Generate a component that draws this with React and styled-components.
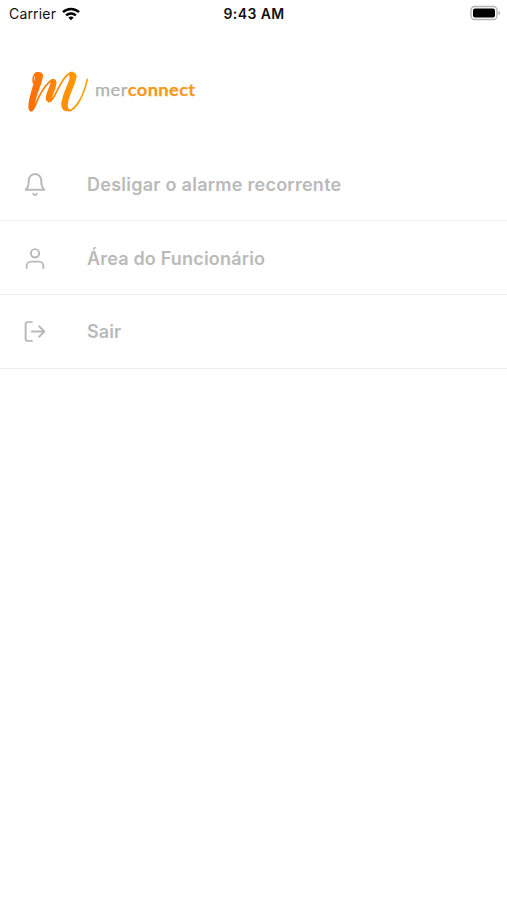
import React from "react";
import styled, { createGlobalStyle } from "styled-components";

const GlobalStyle = createGlobalStyle`
  *, *::before, *::after { box-sizing: border-box; }
  body { margin: 0; background: #fff; font-family: Inter, "Liberation Sans", sans-serif; }
`;

const Screen = styled.div`
  display: flex;
  flex-direction: column;
  width: 100%;
  height: 900px;
  overflow: hidden;
  background: #fff;
`;

const StatusBar = styled.header`
  display: grid;
  grid-template-columns: 1fr auto 1fr;
  align-items: center;
  height: 28px;
  padding: 0 6px 0 9px;
  color: #111;
`;

const Network = styled.div`
  display: flex;
  align-items: center;
  gap: 6px;
`;

const Carrier = styled.span`
  font-size: 14px;
  line-height: 20px;
  letter-spacing: 0.18px;
`;

const Clock = styled.time`
  margin-right: 2px;
  font-size: 14px;
  line-height: 20px;
  font-weight: 600;
  letter-spacing: 0.4px;
`;

const BatterySlot = styled.div`
  display: flex;
  justify-content: flex-end;
  padding-bottom: 2px;
`;

const Brand = styled.div`
  display: flex;
  align-items: flex-start;
  height: 120px;
  padding: 34px 0 0 20px;
`;

const Wordmark = styled.div`
  margin-top: 16px;
  font-family: Lato, sans-serif;
  font-size: 17px;
  line-height: 24px;
  letter-spacing: 0.4px;
  color: #b0b0b0;
  -webkit-text-stroke: 0.25px currentColor;
  transform: scaleX(1.08);
  transform-origin: left center;
`;

const WordmarkStrong = styled.span`
  font-weight: 700;
  letter-spacing: 0.3px;
  color: #f59a1b;
`;

const Menu = styled.nav`
  display: flex;
  flex-direction: column;
`;

const MenuIcon = styled.svg`
  flex: none;
  width: 26px;
  height: 25px;
  margin-right: 39px;
  fill: none;
  stroke: #bababa;
  stroke-width: 1.9;
  stroke-linecap: round;
  stroke-linejoin: round;
`;

const MenuLabel = styled.span`
  padding-top: 2px;
  font-size: 18px;
  line-height: 24px;
  font-weight: 600;
  letter-spacing: ${(p) => p.$spacing};
`;

const MenuItem = styled.a`
  display: flex;
  align-items: center;
  height: 74px;
  padding: 1px 0 0 22px;
  border-bottom: 1px solid #efefef;
  color: #bababa;
  &:first-child { height: 73px; padding-top: 0; }
  &:last-child { padding-top: 0; }
  &:last-child ${MenuLabel} { padding-top: 0; }
`;

function Wifi() {
  return (
    <svg width="18" height="14" viewBox="0 0 18 14" fill="none" stroke="#000" strokeWidth="2.5">
      <path d="M1 5.1C5.5 .8 12.5 .8 17 5.1" />
      <path d="M4.1 8.4C6.9 5.8 11.1 5.8 13.9 8.4" />
      <path d="M9 13.3 6.3 10.6Q9 8.5 11.7 10.6Z" fill="#000" stroke="none" />
    </svg>
  );
}

function Battery() {
  return (
    <svg width="31" height="16" viewBox="0 0 31 16">
      <rect x="1" y="1.5" width="26" height="13" rx="3.8" fill="#fff" stroke="#b5b5b5" strokeWidth="1.4" />
      <rect x="3" y="3.5" width="22" height="9" rx="2" fill="#000" />
      <path d="M28.5 6v4q1.6-.6 1.6-2t-1.6-2Z" fill="#aaa" />
    </svg>
  );
}

function LogoMark() {
  return (
    <svg width="75" height="58" viewBox="0 0 225 174">
      <defs>
        <linearGradient id="flame" gradientUnits="userSpaceOnUse" x1="26" y1="0" x2="202" y2="0">
          <stop offset="0" stopColor="#ff6d08" />
          <stop offset=".5" stopColor="#ff8a08" />
          <stop offset="1" stopColor="#ffa400" />
        </linearGradient>
      </defs>
      {/* Broad downstrokes */}
      <g fill="url(#flame)">
        <path d="M43 34C52 27 68 29 69 39C69 57 55 85 48 112C44 129 45 149 33 149C21 148 25 123 30 103C35 82 43 61 45 46Z" />
        <path d="M88 58C94 49 107 48 109 57C112 71 100 91 96 110C94 121 85 122 80 117C75 110 78 98 83 86C88 73 92 64 91 62Z" />
        <path d="M147 35C157 27 169 31 170 42C170 60 148 97 144 124C142 136 145 142 151 144C139 153 125 146 124 130C124 106 141 73 149 49Z" />
      </g>
      {/* Hairline upstrokes */}
      <g fill="none" stroke="url(#flame)" strokeWidth="5" strokeLinecap="round" strokeLinejoin="round">
        <path d="M40 62C38 47 42 36 51 33" />
        <path d="M34 145C43 145 46 126 56 106C68 82 82 62 97 53" />
        <path d="M86 119C101 119 111 79 132 50C139 40 147 33 157 31" />
        <path d="M146 146C170 143 191 99 202 52" />
      </g>
    </svg>
  );
}

const ITEMS = [
  {
    label: "Desligar o alarme recorrente",
    spacing: "0.26px",
    icon: (
      <>
        <path d="M18 8A6 6 0 0 0 6 8c0 7-3 9-3 9h18s-3-2-3-9" />
        <path d="M13.73 21a2 2 0 0 1-3.46 0" />
      </>
    ),
  },
  {
    label: "Área do Funcionário",
    spacing: "0.18px",
    icon: (
      <>
        <path d="M20 21v-2a4 4 0 0 0-4-4H8a4 4 0 0 0-4 4v2" />
        <circle cx="12" cy="7" r="4" />
      </>
    ),
  },
  {
    label: "Sair",
    spacing: "0.1px",
    icon: (
      <>
        <path d="M9 21H5a2 2 0 0 1-2-2V5a2 2 0 0 1 2-2h4" />
        <path d="m16 17 5-5-5-5M21 12H9" />
      </>
    ),
  },
];

export default function App() {
  return (
    <Screen>
      <GlobalStyle />
      <StatusBar>
        <Network>
          <Carrier>Carrier</Carrier>
          <Wifi />
        </Network>
        <Clock>9:43 AM</Clock>
        <BatterySlot>
          <Battery />
        </BatterySlot>
      </StatusBar>
      <Brand>
        <LogoMark />
        <Wordmark>
          mer<WordmarkStrong>connect</WordmarkStrong>
        </Wordmark>
      </Brand>
      <Menu>
        {ITEMS.map((item) => (
          <MenuItem key={item.label}>
            <MenuIcon viewBox="0 0 24 24">{item.icon}</MenuIcon>
            <MenuLabel $spacing={item.spacing}>{item.label}</MenuLabel>
          </MenuItem>
        ))}
      </Menu>
    </Screen>
  );
}
